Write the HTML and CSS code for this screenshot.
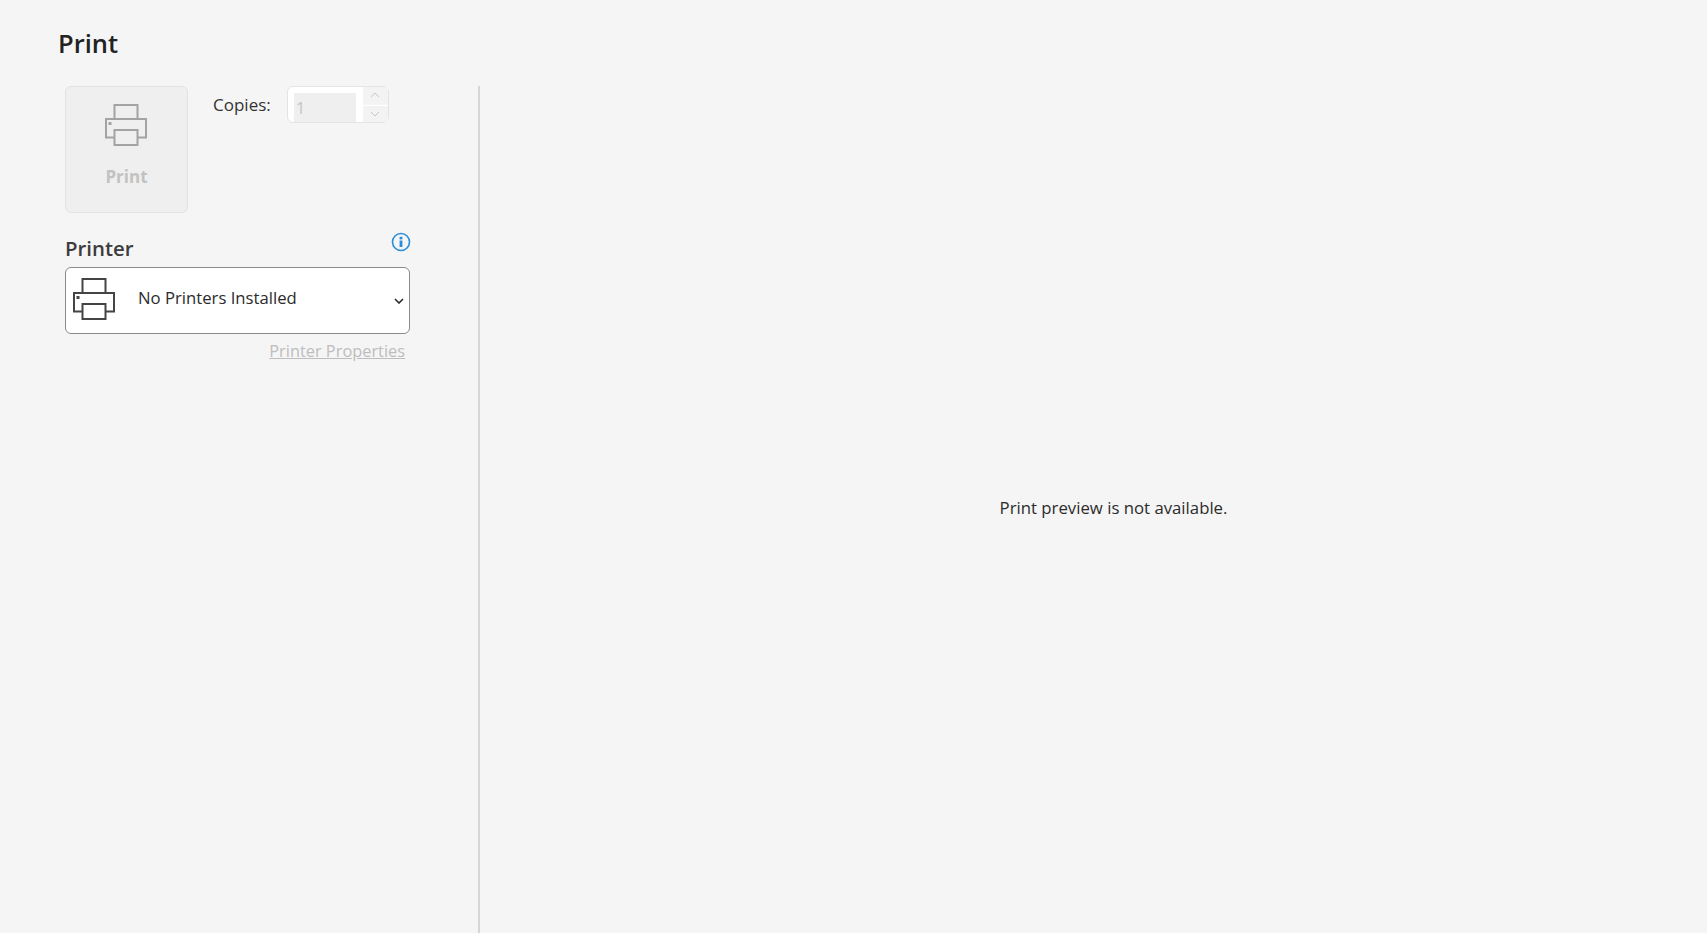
FILE: index.html
```html
<!DOCTYPE html>
<html lang="en">
<head>
  <meta charset="UTF-8">
  <title>Print</title>
  <link rel="stylesheet" href="styles.css">
</head>
<body>

  <h1 class="title">Print</h1>

  <div class="content">
    <!-- LEFT PANEL -->
    <div class="panel">
      <div class="top-row">
        <button class="print-btn" disabled>
          <svg class="print-icon" width="42" height="42" viewBox="0 0 42 42">
            <use href="#printer"></use>
          </svg>
          <span>Print</span>
        </button>
        <label class="copies-label">Copies:</label>
        <div class="spinner">
          <div class="spinner-input">1</div>
          <div class="spinner-arrows">
            <div class="arrow">
              <svg width="10" height="6" viewBox="0 0 10 6"><path d="M1 5l4-4 4 4"/></svg>
            </div>
            <div class="arrow">
              <svg width="10" height="6" viewBox="0 0 10 6"><path d="M1 1l4 4 4-4"/></svg>
            </div>
          </div>
        </div>
      </div>

      <div class="printer-head">
        <h2>Printer</h2>
        <svg class="info" width="20" height="20" viewBox="0 0 20 20">
          <circle cx="10" cy="10" r="8.5"/>
          <rect x="8.6" y="8.5" width="2.8" height="6.5"/>
          <rect x="8.6" y="4.8" width="2.8" height="2.6"/>
        </svg>
      </div>

      <div class="select">
        <svg class="select-icon" width="42" height="42" viewBox="0 0 42 42">
          <use href="#printer"></use>
        </svg>
        <span class="select-text">No Printers Installed</span>
        <svg class="chevron" width="10" height="6" viewBox="0 0 10 6"><path d="M1 1l4 4 4-4"/></svg>
      </div>

      <a class="props-link">Printer Properties</a>
    </div>

    <!-- PREVIEW -->
    <div class="preview">Print preview is not available.</div>
  </div>

  <svg width="0" height="0" class="defs">
    <symbol id="printer" viewBox="0 0 42 42">
      <path d="M9.5 15V1h23v14" />
      <path d="M9.5 33.5H1V15h40v18.5h-8.500" />
      <rect x="9.500" y="26" width="23" height="15" />
      <rect class="dot" x="3.500" y="18" width="3" height="3" />
    </symbol>
  </svg>

</body>
</html>
```

FILE: styles.css
```css
html, body {
  height: 100%;
  margin: 0;
  padding: 0;
  font-family: 'Open Sans', 'Noto Sans', sans-serif;
  background: #f5f5f5;
  color: #222;
}

body {
  display: flex;
  flex-direction: column;
}

.defs {
  position: absolute;
}

.dot {
  fill: currentColor;
  stroke: none;
}

.title {
  margin: 0;
  height: 86px;
  padding: 25px 0 0 58px;
  box-sizing: border-box;
  font-size: 25.500px;
  line-height: 37px;
  font-weight: 600;
  color: #222;
}

.content {
  flex: 1;
  display: flex;
}

.panel {
  width: 480px;
  box-sizing: border-box;
  padding-left: 65px;
  border-right: 2px solid #d6d6d6;
}

.top-row {
  display: flex;
  align-items: flex-start;
}

.print-btn {
  width: 123px;
  height: 127px;
  padding: 17px 0 0;
  background: #efefef;
  border: 1px solid #e2e2e2;
  border-radius: 6px;
  color: #c2c2c2;
  font-family: inherit;
  font-size: 17px;
  font-weight: 700;
  display: flex;
  flex-direction: column;
  align-items: center;
}

.print-btn span {
  margin-top: 20px;
  line-height: 22px;
}

.print-icon {
  margin-left: -2px;
  color: #a3a3a3;
  stroke: currentColor;
  stroke-width: 2;
  fill: none;
}

.copies-label {
  margin: 8px 16px 0 25px;
  font-size: 17px;
  line-height: 22px;
  color: #333;
}

.spinner {
  width: 102px;
  height: 37px;
  box-sizing: border-box;
  display: flex;
  background: #fff;
  border: 1px solid #e4e4e4;
  border-radius: 6px;
  padding: 6px 0 0 6px;
}

.spinner-input {
  width: 62px;
  height: 29px;
  margin-bottom: -1px;
  background: #efefef;
  color: #c9c5c2;
  font-size: 17px;
  line-height: 30px;
  padding-left: 2px;
  box-sizing: border-box;
}

.spinner-arrows {
  width: 25px;
  margin: -6px 0 0 7px;
  display: flex;
  flex-direction: column;
  background: #f5f5f5;
  gap: 1px;
  border-radius: 0 6px 6px 0;
  box-sizing: border-box;
}

.arrow {
  flex: 1;
  display: flex;
  align-items: center;
  justify-content: center;
  background: #f3f3f3;
}

.arrow + .arrow {
  border-top: 1px solid #fff;
}

.arrow svg path {
  fill: none;
  stroke: #c6c6c6;
  stroke-width: 1;
}

.printer-head {
  width: 345px;
  height: 54px;
  display: flex;
  justify-content: space-between;
  align-items: flex-start;
}

.printer-head h2 {
  margin: 21px 0 0 0;
  font-size: 20.400px;
  line-height: 28px;
  font-weight: 600;
  color: #3c3c3c;
}

.info {
  margin: 19px -1px 0 0;
}

.info circle {
  fill: none;
  stroke: #2a8fd6;
  stroke-width: 1.600;
}

.info rect {
  fill: #2a8fd6;
}

.select {
  width: 345px;
  height: 67px;
  box-sizing: border-box;
  display: flex;
  align-items: center;
  background: #fff;
  border: 1px solid #8a8a8a;
  border-radius: 6px;
  padding: 0 4px 0 7px;
}

.select-icon {
  margin-bottom: 3px;
  color: #444;
  stroke: currentColor;
  stroke-width: 2;
  fill: none;
}

.select-text {
  flex: 1;
  margin: 0 0 6px 23px;
  font-size: 16.700px;
  color: #2b2b2b;
}

.chevron {
  margin-right: 1px;
}

.chevron path {
  fill: none;
  stroke: #222;
  stroke-width: 1.500;
}

.props-link {
  display: block;
  width: 340px;
  margin-top: 6px;
  text-align: right;
  font-size: 16.350px;
  line-height: 23px;
  color: #bdbdbd;
  text-decoration: underline;
}

.preview {
  flex: 1;
  display: flex;
  align-items: center;
  justify-content: center;
  padding: 0 0 4px 40px;
  font-size: 16.750px;
  color: #2b2b2b;
}
```
